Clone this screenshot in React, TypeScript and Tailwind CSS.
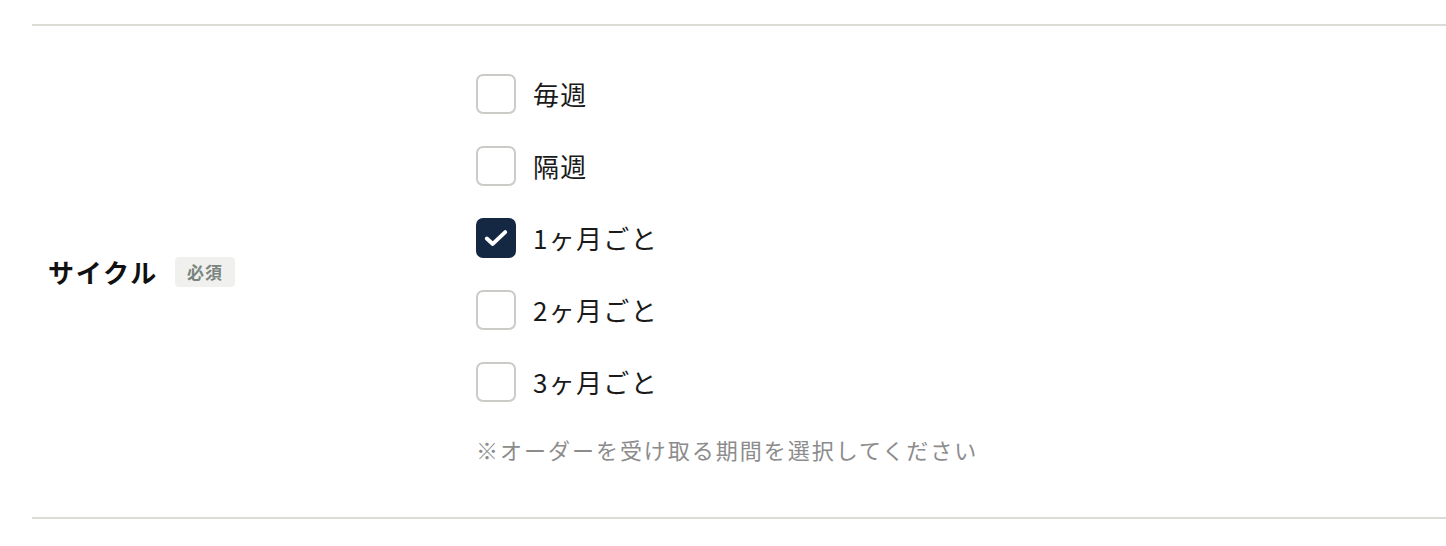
import { useState } from 'react'

const options = ['毎週', '隔週', '1ヶ月ごと', '2ヶ月ごと', '3ヶ月ごと']

function App() {
  const [selected, setSelected] = useState<string[]>(['1ヶ月ごと'])

  const toggle = (value: string) =>
    setSelected((prev) => (prev.includes(value) ? prev.filter((v) => v !== value) : [...prev, value]))

  return (
    <div
      className="min-h-screen bg-white pt-6 pl-8"
      style={{ fontFamily: '"Noto Sans CJK JP", "Noto Sans", sans-serif' }}
    >
      {/* Form row */}
      <div className="flex border-y-2 border-[#dcdcd7]">
        <div className="flex w-[444px] shrink-0 items-center gap-[17px] pl-4">
          <span className="text-[26px] font-bold leading-none tracking-[0.07em] text-[#111]">サイクル</span>
          <span className="rounded bg-[#f0f1ee] px-3 text-[17px] font-bold leading-[30px] tracking-[0.06em] text-[#7b8580]">
            必須
          </span>
        </div>

        <div className="flex flex-col pt-12 pb-[53px]">
          <div className="flex flex-col gap-8">
            {options.map((opt) => {
              const checked = selected.includes(opt)
              return (
                <label key={opt} className="flex h-10 cursor-pointer items-center gap-[17px]">
                  <button
                    type="button"
                    onClick={() => toggle(opt)}
                    className={`flex h-10 w-10 items-center justify-center rounded-[7px] border-2 ${
                      checked ? 'border-[#142844] bg-[#142844]' : 'border-[#c9ccc7] bg-white'
                    }`}
                  >
                    {checked && (
                      <svg viewBox="0 0 24 24" className="h-[26px] w-[26px]" fill="none">
                        <path
                          d="M3.5 12.5l5.5 5L20.5 6.5"
                          stroke="white"
                          strokeWidth="3.6"
                          strokeLinecap="round"
                          strokeLinejoin="round"
                        />
                      </svg>
                    )}
                  </button>
                  <span className="text-[26px] leading-none tracking-[0.05em] text-[#1a1a1a]">{opt}</span>
                </label>
              )
            })}
          </div>
          <p className="mt-[32px] text-[22px] leading-[30px] tracking-[0.09em] text-[#8c8c8c]">
            ※オーダーを受け取る期間を選択してください
          </p>
        </div>
      </div>
    </div>
  )
}

export default App
